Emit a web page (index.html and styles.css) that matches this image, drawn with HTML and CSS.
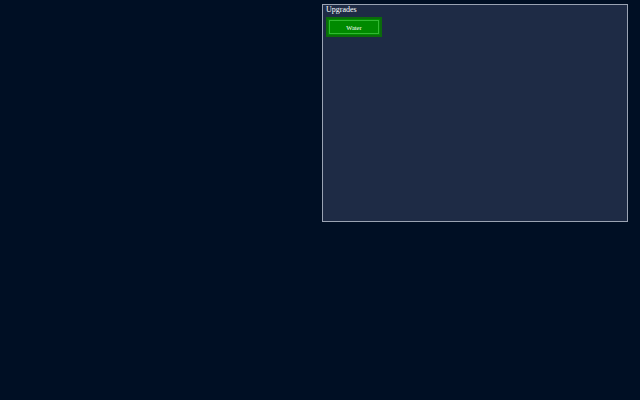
FILE: index.html
```html
<!DOCTYPE html>
<html>
<head>
<meta charset="utf-8">
<link rel="stylesheet" href="styles.css">
</head>
<body>
<div class="layout">
  <div class="spacer"></div>
  <section class="panel">
    <div class="panel-title">Upgrades</div>
    <div class="upgrades">
      <button class="upgrade">Water</button>
    </div>
  </section>
</div>
</body>
</html>
```
FILE: styles.css
```css
html, body {
  margin: 0;
  padding: 0;
  background: #000f24;
  width: 640px;
  height: 400px;
  overflow: hidden;
  font-family: "Liberation Serif", "Times New Roman", serif;
}
.layout {
  display: flex;
  padding-top: 4px;
}
.spacer {
  width: 322px;
  flex: none;
}
.panel {
  width: 304px;
  height: 216px;
  background: #1e2b45;
  border: 1px solid #9aa3b3;
  color: #ffffff;
}
.panel-title {
  font-size: 8px;
  line-height: 8px;
  padding: 1px 0 0 3px;
}
.upgrades {
  display: flex;
  padding: 3px 0 0 3px;
}
.upgrade {
  width: 56px;
  height: 20px;
  background: #008a00;
  border: 2px solid #0b6b0b;
  outline: 1px solid #32b832;
  outline-offset: -4px;
  color: #ffffff;
  font-family: "Liberation Serif", "Times New Roman", serif;
  font-size: 6.5px;
  padding: 0;
  margin: 0;
}
```
